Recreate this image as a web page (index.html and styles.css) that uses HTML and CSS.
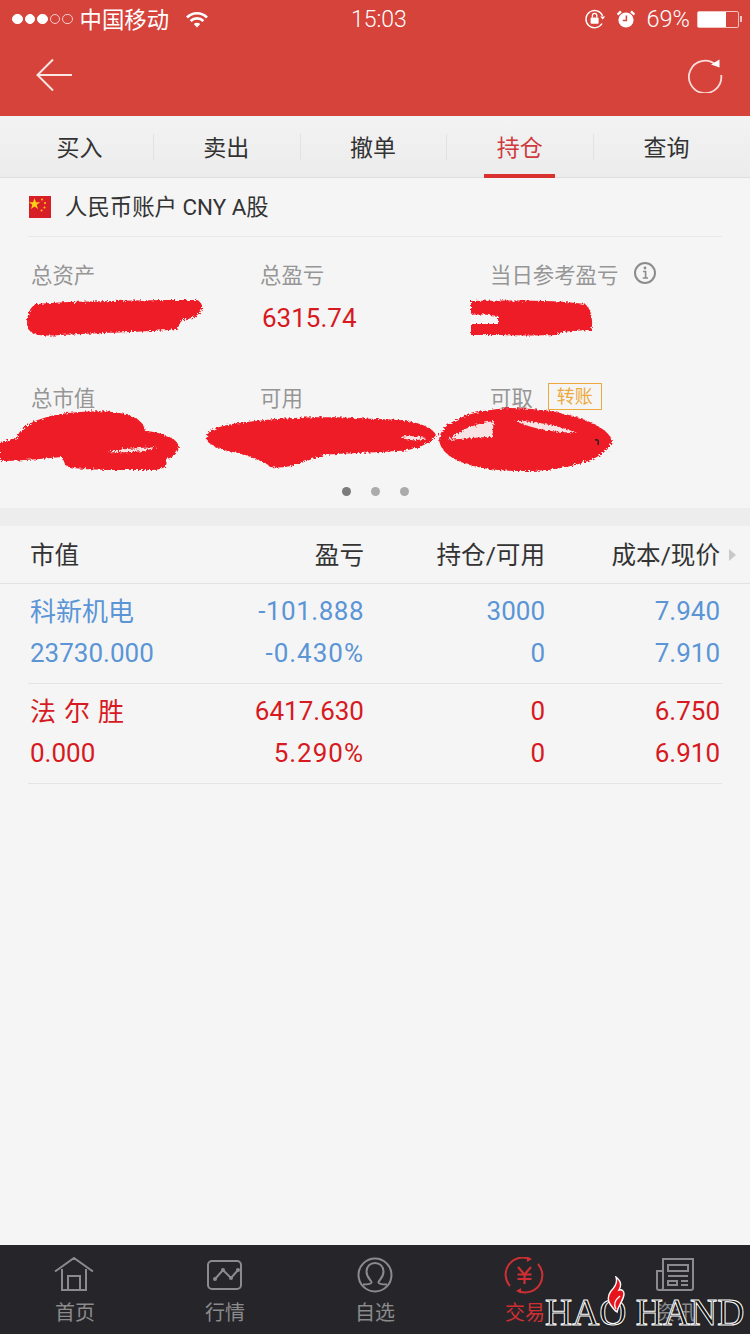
FILE: index.html
```html
<!DOCTYPE html>
<html lang="zh-CN">
<head>
    <meta charset="UTF-8">
    <meta name="viewport" content="width=device-width, initial-scale=1.0">
    <title>持仓</title>
    <link rel="stylesheet" href="styles.css">
</head>
<body>
    <div class="app">
        <header class="top">
            <div class="status-bar">
                <div class="signal"><i class="on"></i><i class="on"></i><i class="on"></i><i></i><i></i></div>
                <span class="carrier">中国移动</span>
                <svg class="wifi" width="24" height="18" viewBox="0 0 24 18">
                    <path d="M2 7.500a14 14 0 0 1 20 0M5.600 11a9 9 0 0 1 12.800 0" fill="none" stroke="#fff" stroke-width="2.600"/>
                    <path d="M8.800 14a4.600 4.600 0 0 1 6.400 0L12 17.400z" fill="#fff"/>
                </svg>
                <span class="time">15:03</span>
                <div class="status-right">
                    <svg width="22" height="22" viewBox="0 0 22 22">
                        <path d="M18.600 8A8.600 8.600 0 1 0 18 15.500" fill="none" stroke="#fff" stroke-width="1.400"/>
                        <path d="M16.200 8.600h5l-2.500 3z" fill="#fff"/>
                        <rect x="6.600" y="9.400" width="8" height="6.400" rx="1" fill="#fff"/>
                        <path d="M8.400 9.400V7.600a2.200 2.200 0 0 1 4.400 0v1.800" fill="none" stroke="#fff" stroke-width="1.300"/>
                    </svg>
                    <svg class="alarm" width="20" height="20" viewBox="0 0 20 20">
                        <circle cx="10" cy="11" r="7.600" fill="#fff"/>
                        <path d="M1.600 5.600 5 2.400M18.400 5.600 15 2.400" stroke="#fff" stroke-width="2.400"/>
                        <path d="M10.400 6.600v4.800H6.800" fill="none" stroke="#d5433b" stroke-width="1.500"/>
                    </svg>
                    <span class="percent">69%</span>
                    <div class="battery"><div class="battery-fill" style="width: 69%"></div></div>
                    <span class="battery-tip"></span>
                </div>
            </div>
            <div class="nav-bar">
                <svg width="38" height="34" viewBox="0 0 38 34">
                    <path d="M18 1.500 2.500 17 18 32.500M2.500 17H37" fill="none" stroke="#fbe6e3" stroke-width="2"/>
                </svg>
                <svg width="36" height="36" viewBox="0 0 36 36">
                    <path d="M28.500 7.500A16.200 16.200 0 1 0 34.200 18" fill="none" stroke="#fbdcd8" stroke-width="1.800"/>
                    <path d="M24 7.500 32.500 2.500V10.500z" fill="#fff"/>
                </svg>
            </div>
        </header>

        <nav class="tabs">
            <div class="tab">买入</div>
            <div class="tab">卖出</div>
            <div class="tab">撤单</div>
            <div class="tab active">持仓</div>
            <div class="tab">查询</div>
        </nav>

        <section class="account">
            <div class="account-row">
                <svg class="flag" width="22" height="22" viewBox="0 0 22 22">
                    <rect width="22" height="22" fill="#d81e26"/>
                    <path d="M5.500 2 6.900 6.200H11.200L7.700 8.800 9 13 5.500 10.400 2 13 3.300 8.800-.2 6.200H4.100z" fill="#fcd116"/>
                    <circle cx="13" cy="3.500" r="1" fill="#fcd116"/>
                    <circle cx="16" cy="7" r="1" fill="#fcd116"/>
                    <circle cx="15.500" cy="11.500" r="1" fill="#fcd116"/>
                    <circle cx="12.500" cy="14.500" r="1" fill="#fcd116"/>
                </svg>
                <span class="account-name">人民币账户 CNY A股</span>
            </div>
            <div class="summary">
                <div class="stat">
                    <div class="stat-label">总资产</div>
                    <div class="stat-value"></div>
                </div>
                <div class="stat">
                    <div class="stat-label">总盈亏</div>
                    <div class="stat-value red">6315.74</div>
                </div>
                <div class="stat">
                    <div class="stat-label">当日参考盈亏
                        <svg class="info" width="24" height="24" viewBox="0 0 24 24">
                            <circle cx="12" cy="12" r="10" fill="none" stroke="#8c8c8c" stroke-width="2"/>
                            <path d="M10 10.500h2.600V17M9.800 17h5.200" fill="none" stroke="#8c8c8c" stroke-width="1.600"/>
                            <circle cx="12" cy="7" r="1.400" fill="#8c8c8c"/>
                        </svg>
                    </div>
                    <div class="stat-value"></div>
                </div>
                <div class="stat">
                    <div class="stat-label">总市值</div>
                    <div class="stat-value"></div>
                </div>
                <div class="stat">
                    <div class="stat-label">可用</div>
                    <div class="stat-value"></div>
                </div>
                <div class="stat">
                    <div class="stat-label">可取<span class="transfer">转账</span></div>
                    <div class="stat-value"></div>
                </div>
            </div>
            <div class="dots"><i class="current"></i><i></i><i></i></div>

            <!-- 涂抹遮挡 -->
            <svg class="scribble" width="750" height="300" viewBox="0 0 750 300">
                <defs>
                    <filter id="rough" x="-5%" y="-10%" width="110%" height="120%">
                        <feTurbulence type="fractalNoise" baseFrequency="0.45" numOctaves="2" seed="4"/>
                        <feDisplacementMap in="SourceGraphic" scale="5"/>
                    </filter>
                </defs>
                <g filter="url(#rough)">
                    <g fill="#ee1c25">
                        <path d="M36 126C70 123 150 122 197 122 205 126 204 135 192 140 184 141 180 142 178 150 178 153 120 154 60 157 38 159 27 156 27 146 27 136 30 129 36 126z"/>
                        <path d="M471 123C510 122 560 122 585 126 593 132 593 148 591 152 570 153 560 153 556 157 530 158 490 157 471 157V146H498V138C490 137 480 136 471 137z"/>
                        <path d="M0 264 17 260C20 246 45 236 80 234 120 231 144 238 145 253 160 254 178 260 179 269 178 276 172 280 166 281 168 288 165 292 150 292 120 292 80 293 66 288 64 284 63 281 62 279 40 281 15 283 0 283z"/>
                        <path d="M207 263C205 253 215 248 240 245 275 240 320 237 375 241 405 241 430 245 436 257 430 266 415 273 395 273 370 275 345 275 324 277 300 285 290 291 270 289 268 285 250 279 240 275 225 273 212 269 207 263z"/>
                        <path d="M439 262C440 244 470 232 510 230 560 230 605 244 612 262 610 280 570 292 530 293 480 294 442 284 439 262z"/>
                    </g>
                    <g fill="#f7e3e3">
                        <path d="M448 262C460 251 478 245 494 243L492 259C478 259 462 261 448 262z"/>
                        <path d="M515 243C540 243 565 250 577 255 555 254 535 252 515 243z"/>
                        <path d="M400 259C408 257 418 258 426 260 418 263 408 263 400 259z"/>
                        <path d="M107 274C120 271 140 270 157 269 145 274 125 275 107 274z"/>
                    </g>
                </g>
                <path d="M595 262c3-1 4 1 3 5" fill="none" stroke="#222" stroke-width="1.500"/>
            </svg>
        </section>

        <div class="band"></div>

        <section class="positions">
            <div class="pos-head">
                <div>市值</div>
                <div>盈亏</div>
                <div>持仓/可用</div>
                <div>成本/现价</div>
                <span class="more"></span>
            </div>
            <div class="pos-row blue">
                <div class="name cn">科新机电</div>
                <div class="wide">-101.888</div>
                <div>3000</div>
                <div>7.940</div>
                <div class="name">23730.000</div>
                <div class="pct">-0.430%</div>
                <div>0</div>
                <div>7.910</div>
            </div>
            <div class="pos-row red">
                <div class="name cn">法 尔 胜</div>
                <div>6417.630</div>
                <div>0</div>
                <div>6.750</div>
                <div class="name">0.000</div>
                <div class="pct">5.290%</div>
                <div>0</div>
                <div>6.910</div>
            </div>
        </section>

        <footer class="tabbar">
            <div class="bar-item">
                <svg class="shift" width="44" height="38" viewBox="0 0 44 38">
                    <path d="M3 14.500 22 1l19 13.500M10 12v21h24V12M16 33V19h12v14" fill="none" stroke="#8b8b8d" stroke-width="2"/>
                </svg>
                <span>首页</span>
            </div>
            <div class="bar-item">
                <svg width="44" height="38" viewBox="0 0 44 38">
                    <rect x="5" y="4" width="33" height="28" rx="4" fill="none" stroke="#8b8b8d" stroke-width="2"/>
                    <path d="M12 22 20 13l8 8 7-8" fill="none" stroke="#8b8b8d" stroke-width="2"/>
                    <circle cx="12" cy="22" r="2" fill="#8b8b8d"/><circle cx="20" cy="13" r="2" fill="#8b8b8d"/>
                    <circle cx="28" cy="21" r="2" fill="#8b8b8d"/><circle cx="35" cy="13" r="2" fill="#8b8b8d"/>
                </svg>
                <span>行情</span>
            </div>
            <div class="bar-item">
                <svg width="44" height="38" viewBox="0 0 44 38">
                    <circle cx="22" cy="18" r="16.500" fill="none" stroke="#8b8b8d" stroke-width="2"/>
                    <path d="M10 27.500c4 0 8-.5 8.500-2 .5-2-5-4-5-11 0-5 3.500-8.500 8.500-8.500s8.500 3.500 8.500 8.500c0 7-5.500 9-5 11 .5 1.500 4.500 2 8.500 2" fill="none" stroke="#8b8b8d" stroke-width="2"/>
                </svg>
                <span>自选</span>
            </div>
            <div class="bar-item active">
                <svg class="shift" width="44" height="38" viewBox="0 0 44 38">
                    <path d="M8 29A17 17 0 0 1 26 1.500M36 7A17 17 0 0 1 18 34.500" fill="none" stroke="#cf2f32" stroke-width="2"/>
                    <path d="M25-.5 30 2l-5 3zM19 31l-5 3 5 2.500z" fill="#cf2f32"/>
                    <path d="M16 10l6.500 7.500L29 10M15.500 17.500h14M15.500 22h14M22.500 17.500V27" fill="none" stroke="#cf2f32" stroke-width="2.200"/>
                </svg>
                <span>交易</span>
            </div>
            <div class="bar-item">
                <svg class="shift" width="44" height="38" viewBox="0 0 44 38">
                    <path d="M11 14H5v17a2 2 0 0 0 2 2h32a2 2 0 0 0 2-2V2H11v29a2 2 0 0 1-2 2" fill="none" stroke="#8b8b8d" stroke-width="2"/>
                    <path d="M16 8h20v6H16zM16 19h20M16 24h9v4h-9zM29 24h7M29 28h7" fill="none" stroke="#8b8b8d" stroke-width="2"/>
                </svg>
                <span>资讯</span>
            </div>

            <div class="watermark">
                <span>HAO HAND</span>
                <svg class="flame" width="20" height="38" viewBox="0 0 20 38">
                    <path d="M10 1c5 4 6 8 3 13 3-1 5 1 5 4 0 6-5 9-7 18-3-2-5-5-7-8-3-5-2-9 1-13 4-4 7-8 5-14z" fill="#e8141c" stroke="#fff" stroke-width="1.400"/>
                    <path d="M10 33c-3-5-1-9 4-13" fill="none" stroke="#fff" stroke-width="1.400"/>
                </svg>
            </div>
        </footer>
    </div>
</body>
</html>
```

FILE: styles.css
```css
* {
    margin: 0;
    padding: 0;
    box-sizing: border-box;
    font-family: Roboto, 'Noto Sans CJK SC', sans-serif;
}

html, body {
    width: 100%;
    height: 100%;
    overflow: hidden;
}

.app {
    display: flex;
    flex-direction: column;
    width: 750px;
    height: 1334px;
    background-color: #f5f5f5;
}

.top {
    height: 116px;
    background-color: #d5433b;
    color: #fff;
}

.status-bar {
    display: flex;
    align-items: center;
    height: 38px;
    padding: 0 8px 0 12px;
    position: relative;
}

.signal {
    display: flex;
    gap: 2px;
}

.signal i {
    width: 10.500px;
    height: 10.500px;
    border: 1px solid #f7cfcb;
    border-radius: 50%;
}

.signal i.on {
    background-color: #fff;
    border-color: #fff;
}

.carrier {
    margin: 0 0 3px 7px;
    font-size: 22.400px;
}

.wifi {
    margin-left: 16px;
}

.time {
    position: absolute;
    left: 351px;
    font-size: 23px;
    font-weight: 300;
}

.status-right {
    display: flex;
    align-items: center;
    margin-left: auto;
}

.alarm {
    margin-left: 10px;
}

.percent {
    margin-left: 11px;
    font-size: 23.500px;
    font-weight: 300;
}

.battery {
    width: 42px;
    height: 17px;
    margin-left: 7px;
    border: 1px solid #f3c4bf;
    border-radius: 2px;
}

.battery-fill {
    height: 100%;
    background-color: #fff;
}

.battery-tip {
    width: 2px;
    height: 6px;
    margin-left: 1px;
    background-color: #f3c4bf;
}

.nav-bar {
    display: flex;
    align-items: center;
    justify-content: space-between;
    height: 74px;
    padding: 0 27px 0 35px;
}

.tabs {
    display: grid;
    grid-template-columns: repeat(5, 1fr);
    height: 62px;
    padding: 0 10px 0 6px;
    background: linear-gradient(#f3f3f3, #ececec);
    border-bottom: 1px solid #dedede;
}

.tab {
    position: relative;
    display: flex;
    align-items: center;
    justify-content: center;
    padding-bottom: 2px;
    font-size: 23px;
    color: #333;
}

.tab:not(:last-child)::after {
    content: "";
    position: absolute;
    top: 18px;
    right: -1px;
    width: 1px;
    height: 26px;
    background-color: #e2e2e2;
}

.tab.active {
    color: #cf3a3e;
}

.tab.active::before {
    content: "";
    position: absolute;
    left: 38px;
    bottom: -1px;
    width: 71px;
    height: 4px;
    background-color: #d9312f;
}

.account {
    position: relative;
    height: 330px;
}

.account-row {
    display: flex;
    align-items: center;
    gap: 14px;
    height: 59px;
    margin: 0 28px;
    padding: 0 1px;
    border-bottom: 1px solid #e8e8e8;
    font-size: 22.400px;
    color: #333;
}

.account-name {
    margin-bottom: 4px;
}

.summary {
    display: grid;
    grid-template-columns: 229px 230px 1fr;
    grid-auto-rows: 123px;
    padding: 17px 0 0 31px;
}

.stat-label {
    display: flex;
    align-items: center;
    height: 38px;
    font-size: 21.400px;
    color: #969696;
}

.stat-value {
    height: 46px;
    margin-top: 3px;
    padding-left: 2px;
    font-size: 26px;
    line-height: 46px;
}

.info {
    margin-left: 15px;
}

.transfer {
    width: 54px;
    height: 27px;
    margin-left: 15px;
    border: 1px solid #eda93d;
    font-size: 18px;
    line-height: 25px;
    text-align: center;
    color: #eda93d;
}

.dots {
    position: absolute;
    left: 342px;
    top: 309px;
    display: flex;
    gap: 20px;
}

.dots i {
    width: 9px;
    height: 9px;
    border-radius: 50%;
    background-color: #ababab;
}

.dots i.current {
    background-color: #7c7c7c;
}

.scribble {
    position: absolute;
    top: 0;
    left: 0;
}

.band {
    height: 18px;
    background-color: #ededed;
}

.positions {
    flex: 1;
}

.pos-head,
.pos-row {
    display: grid;
    grid-template-columns: 150px 184px 181px 175px;
    text-align: right;
}

.pos-head {
    position: relative;
    height: 58px;
    padding: 0 30px 3px;
    align-items: center;
    border-bottom: 1px solid #e2e2e2;
    font-size: 24.600px;
    color: #333;
}

.pos-head div:first-child,
.pos-row .name {
    text-align: left;
}

.more {
    position: absolute;
    left: 729px;
    top: 23px;
    border-left: 7px solid #c9c9c9;
    border-top: 6px solid transparent;
    border-bottom: 6px solid transparent;
}

.pos-row {
    height: 100px;
    margin: 0 28px;
    padding: 6px 2px 0;
    grid-auto-rows: 42px;
    align-items: center;
    border-bottom: 1px solid #e4e4e4;
    font-size: 26px;
}

.pos-row .cn {
    padding-bottom: 4px;
    word-spacing: 1.500px;
}

.wide {
    letter-spacing: 0.500px;
}

.pct {
    letter-spacing: 1px;
}

.blue {
    color: #5b95d6;
}

.red {
    color: #d71a21;
}

.tabbar {
    position: relative;
    display: grid;
    grid-template-columns: repeat(5, 1fr);
    height: 89px;
    background-color: #26262a;
}

.bar-item {
    display: flex;
    flex-direction: column;
    align-items: center;
    padding-top: 12px;
    font-size: 20px;
    color: #8b8b8d;
}

.bar-item span {
    margin-top: 3px;
    line-height: 30px;
}

.bar-item .shift {
    margin-right: 3px;
}

.bar-item.active {
    color: #cf2f32;
}

.watermark {
    position: absolute;
    left: 545px;
    top: 46px;
    font-size: 37.600px;
    line-height: 42px;
    white-space: nowrap;
}

.watermark span {
    font-family: 'Liberation Serif', serif;
    color: #111;
    -webkit-text-stroke: 1px #fff;
    text-shadow: 0 0 2px #000;
}

.flame {
    position: absolute;
    left: 61px;
    top: -15px;
}
```
